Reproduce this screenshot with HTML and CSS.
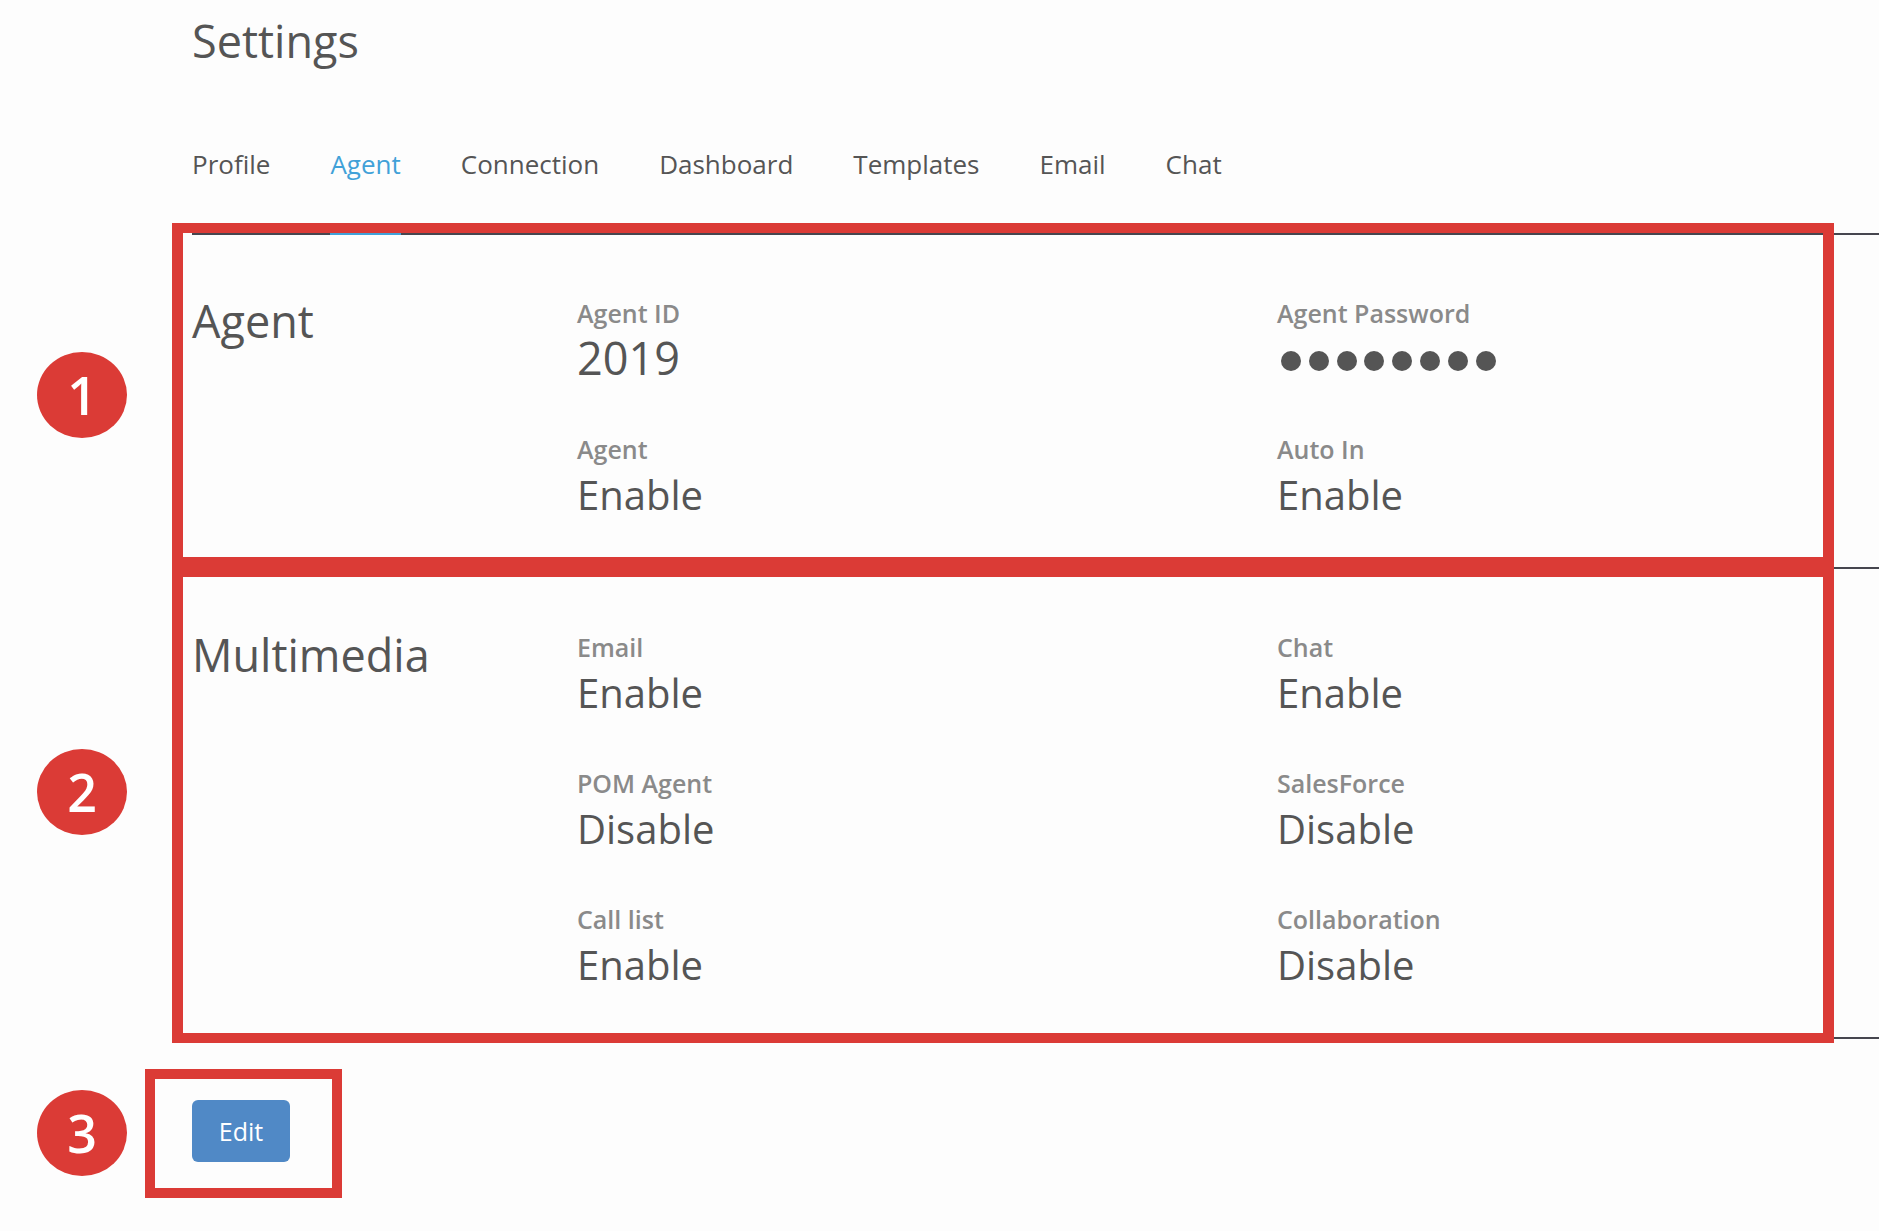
FILE: index.html
```html
<!DOCTYPE html>
<html lang="en">
<head>
    <meta charset="UTF-8">
    <meta name="viewport" content="width=device-width, initial-scale=1.0">
    <title>Settings</title>
    <link rel="stylesheet" href="styles.css">
</head>
<body>

    <main class="page">
        <h1 class="page-title">Settings</h1>

        <nav class="tabs">
            <a class="tab">Profile</a>
            <a class="tab active">Agent</a>
            <a class="tab">Connection</a>
            <a class="tab">Dashboard</a>
            <a class="tab">Templates</a>
            <a class="tab">Email</a>
            <a class="tab">Chat</a>
        </nav>

        <section class="group group-agent">
            <span class="mark"></span>
            <span class="badge">1</span>
            <h2 class="group-title">Agent</h2>
            <div class="fields">
                <div class="field">
                    <div class="field-label">Agent ID</div>
                    <div class="field-value big">2019</div>
                </div>
                <div class="field">
                    <div class="field-label">Agent Password</div>
                    <div class="dots">
                        <span></span><span></span><span></span><span></span>
                        <span></span><span></span><span></span><span></span>
                    </div>
                </div>
                <div class="field">
                    <div class="field-label">Agent</div>
                    <div class="field-value">Enable</div>
                </div>
                <div class="field">
                    <div class="field-label">Auto In</div>
                    <div class="field-value">Enable</div>
                </div>
            </div>
        </section>

        <section class="group group-media">
            <span class="mark"></span>
            <span class="badge">2</span>
            <h2 class="group-title">Multimedia</h2>
            <div class="fields">
                <div class="field">
                    <div class="field-label">Email</div>
                    <div class="field-value">Enable</div>
                </div>
                <div class="field">
                    <div class="field-label">Chat</div>
                    <div class="field-value">Enable</div>
                </div>
                <div class="field">
                    <div class="field-label">POM Agent</div>
                    <div class="field-value">Disable</div>
                </div>
                <div class="field">
                    <div class="field-label">SalesForce</div>
                    <div class="field-value">Disable</div>
                </div>
                <div class="field">
                    <div class="field-label">Call list</div>
                    <div class="field-value">Enable</div>
                </div>
                <div class="field">
                    <div class="field-label">Collaboration</div>
                    <div class="field-value">Disable</div>
                </div>
            </div>
        </section>

        <div class="actions">
            <button class="edit-button">Edit</button>
            <span class="mark"></span>
            <span class="badge">3</span>
        </div>
    </main>

</body>
</html>
```

FILE: styles.css
```css
:root {
    --bg-color: #fdfdfd;
    --text-color: #555555;
    --label-color: #8a8a8a;
    --line-color: #46464f;
    --active-color: #41a1d8;
    --button-bg: #5089c6;
    --mark-color: #db3b36;
}

* {
    margin: 0;
    padding: 0;
    box-sizing: border-box;
}

body {
    font-family: "Open Sans", "Liberation Sans", sans-serif;
    background-color: var(--bg-color);
    color: var(--text-color);
}

.page {
    padding: 15px 0 40px 192px;
}

.page-title {
    font-size: 45px;
    line-height: 52px;
    font-weight: 400;
}

.tabs {
    display: flex;
    gap: 60px;
    margin-top: 79px;
    border-bottom: 2px solid var(--line-color);
}

.tab {
    font-size: 26px;
    line-height: 36px;
    padding-bottom: 51px;
    border-bottom: 2px solid transparent;
    margin-bottom: -2px;
    cursor: pointer;
}

.tab.active {
    color: var(--active-color);
    border-bottom-color: var(--active-color);
}

.group {
    position: relative;
    display: grid;
    grid-template-columns: 385px 1fr;
    padding: 60px 0 46px;
}

.group + .group {
    border-top: 2px solid var(--line-color);
    border-bottom: 2px solid var(--line-color);
}

.group-title {
    font-size: 45px;
    line-height: 52px;
    font-weight: 400;
}

.fields {
    display: grid;
    grid-template-columns: 700px 1fr;
    row-gap: 46px;
}

.field-label {
    font-size: 25px;
    line-height: 36px;
    font-weight: 600;
    color: var(--label-color);
}

.field-value {
    font-size: 40px;
    line-height: 52px;
    margin-top: 2px;
}

.field-value.big {
    font-size: 45px;
    margin-top: 1px;
}

.dots {
    display: flex;
    gap: 7.8px;
    height: 54px;
    padding: 20px 0 0 4px;
}

.dots span {
    width: 20px;
    height: 20px;
    border-radius: 50%;
    background-color: #555;
}

.actions {
    position: relative;
    padding-top: 61px;
}

.edit-button {
    width: 98px;
    height: 62px;
    border: none;
    border-radius: 6px;
    background-color: var(--button-bg);
    color: #ffffff;
    font-family: "Open Sans", "Liberation Sans", sans-serif;
    font-size: 25px;
    cursor: pointer;
}

/* annotation overlay */
.mark {
    position: absolute;
    border: 10px solid var(--mark-color);
    border-left-width: 11px;
    border-right-width: 11px;
    pointer-events: none;
}

.group-agent .mark {
    top: -12px;
    bottom: 0;
    left: -20px;
    right: 45px;
}

.group-media .mark {
    top: -2px;
    bottom: -6px;
    left: -20px;
    right: 45px;
}

.actions .mark {
    top: 30px;
    left: -47px;
    width: 197px;
    height: 129px;
    border-width: 10px;
}

.badge {
    position: absolute;
    left: -155px;
    width: 90px;
    height: 86px;
    border-radius: 50%;
    background-color: var(--mark-color);
    color: #ffffff;
    font-size: 52px;
    font-weight: 600;
    line-height: 86px;
    text-align: center;
}

.group-agent .badge {
    top: 117px;
}

.group-media .badge {
    top: 180px;
}

.actions .badge {
    top: 51px;
}
```
